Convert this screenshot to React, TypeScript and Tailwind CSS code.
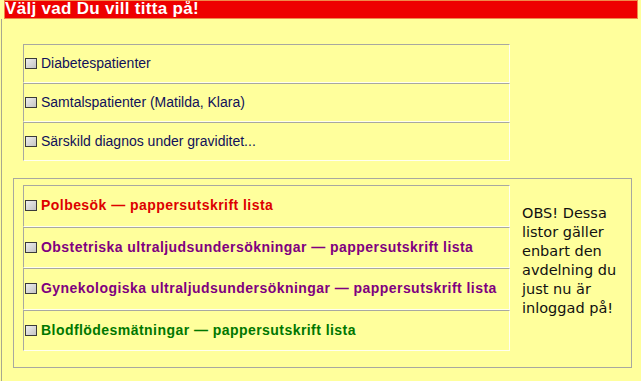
import React from 'react';

const firstRows = [
  'Diabetespatienter',
  'Samtalspatienter (Matilda, Klara)',
  'Särskild diagnos under graviditet...',
];

const listRows = [
  { label: 'Polbesök — pappersutskrift lista', color: 'text-[#dd0000]' },
  { label: 'Obstetriska ultraljudsundersökningar — pappersutskrift lista', color: 'text-[#800080]' },
  { label: 'Gynekologiska ultraljudsundersökningar — pappersutskrift lista', color: 'text-[#800080]' },
  { label: 'Blodflödesmätningar — pappersutskrift lista', color: 'text-[#007700]' },
];

function Box() {
  return (
    <span className="inline-block w-[12px] h-[11px] shrink-0 border border-[#3a3a3a] bg-gradient-to-br from-[#eeeeee] to-[#c4c4c4] mr-[4px]" />
  );
}

export default function App() {
  return (
    <div className="w-full h-[381px] bg-[#ffff9c] font-['Liberation_Sans',Arial,sans-serif] overflow-hidden">
      <div className="ml-[4px] mr-[3px] h-[19px] bg-[#ee0000] border border-[#f08a4a] text-white font-bold text-[17px] tracking-[0.3px] leading-[15px] pl-[0px] overflow-hidden">
        Välj vad Du vill titta på!
      </div>

      <div className="ml-[1px] h-[362px] border-l border-[#a8a890] pt-[25px]">
        <div className="ml-[21px] w-[487px] flex flex-col">
          {firstRows.map((row) => (
            <div
              key={row}
              className="h-[39px] flex items-center pl-[1px] border-t border-l border-[#a8a8a0] border-b border-r border-b-[#fffff0] border-r-[#fffff0] text-[14px] text-[#10105a]"
            >
              <Box />
              {row}
            </div>
          ))}
        </div>

        <div className="mt-[17px] ml-[11px] w-[619px] h-[190px] border border-[#a8a8a0] flex">
          <div className="pl-[9px] pt-[6px] w-[498px]">
            <div className="w-[487px] flex flex-col">
              {listRows.map((row) => (
                <div
                  key={row.label}
                  className={`h-[41.5px] flex items-center pl-[1px] border-t border-l border-[#a8a8a0] border-b border-r border-b-[#fffff0] border-r-[#fffff0] text-[14px] font-bold tracking-[0.45px] whitespace-nowrap ${row.color}`}
                >
                  <Box />
                  {row.label}
                </div>
              ))}
            </div>
          </div>
          <div className="pl-[10px] pt-[25px]">
            <p className="font-['DejaVu_Sans',Verdana,sans-serif] text-[14.5px] leading-[19px] text-[#111111] w-[104px]">
              OBS! Dessa listor gäller enbart den avdelning du just nu är inloggad på!
            </p>
          </div>
        </div>
      </div>
    </div>
  );
}
